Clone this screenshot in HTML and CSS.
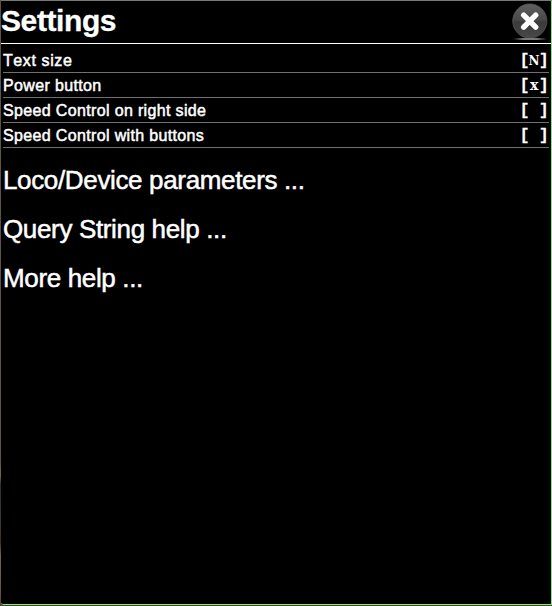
FILE: index.html
```html
<!DOCTYPE html>
<html lang="en">
<head>
<meta charset="utf-8">
<title>Settings</title>
<link rel="stylesheet" href="styles.css">
</head>
<body>
<main class="panel">
  <header class="header">
    <h1 class="title">Settings</h1>
    <svg class="close" width="38" height="40" viewBox="0 0 38 40" role="img" aria-label="Close">
      <defs>
        <linearGradient id="disc" x1="0" y1="0" x2="0" y2="1">
          <stop offset="0" stop-color="#606060"/>
          <stop offset=".48" stop-color="#484848"/>
          <stop offset=".52" stop-color="#3b3b3b"/>
          <stop offset="1" stop-color="#484848"/>
        </linearGradient>
        <linearGradient id="shine" x1="0" y1="0" x2="1" y2="0">
          <stop offset="0" stop-color="#777" stop-opacity="0"/>
          <stop offset=".3" stop-color="#777"/>
          <stop offset=".7" stop-color="#777"/>
          <stop offset="1" stop-color="#777" stop-opacity="0"/>
        </linearGradient>
      </defs>
      <circle cx="18.800" cy="20" r="17.100" fill="url(#disc)" stroke="#555" stroke-width=".8"/>
      <path d="M2 37h34v2H2z" fill="url(#shine)"/>
      <path d="M12.700 14.200l12 12M24.700 14.200l-12 12" stroke="#fff" stroke-width="5.400" stroke-linecap="round"/>
    </svg>
  </header>
  <ul class="options">
    <li class="option"><span class="label short">Text size</span><span class="value">[<span class="mark">N</span>]</span></li>
    <li class="option"><span class="label">Power button</span><span class="value">[<span class="mark lower">x</span>]</span></li>
    <li class="option"><span class="label">Speed Control on right side</span><span class="value">[ ]</span></li>
    <li class="option"><span class="label">Speed Control with buttons</span><span class="value">[ ]</span></li>
  </ul>
  <nav class="links">
    <a class="link">Loco/Device parameters ...</a>
    <a class="link">Query String help ...</a>
    <a class="link">More help ...</a>
  </nav>
</main>
</body>
</html>
```
FILE: styles.css
```css
* { box-sizing: border-box; }
body {
  margin: 0;
  height: 606px;
  padding: 0 0 1px 1px;
  overflow: hidden;
  background: linear-gradient(#5d5340 0 460px, #79664d 475px, #352a2b 485px, #40353d 525px, #4b2b08 543px, #75644e 555px, #735333 590px, #4c4330 606px);
  color: #fff;
  font-family: "Liberation Sans", Arial, sans-serif;
}
.panel {
  height: 605px;
  background: #000;
  border-top: 1px solid #777;
  border-right: 1px solid #78f078;
  border-bottom: 1px solid #78f078;
  border-bottom-left-radius: 3px;
}
.header {
  display: flex;
  justify-content: space-between;
  height: 43px;
  border-bottom: 1px solid #fff;
}
.title {
  margin: 0;
  font-size: 30px;
  line-height: 40px;
  letter-spacing: -0.4px;
  -webkit-text-stroke: 0.3px #fff;
}
.close { display: block; margin-right: 2px; }
.options {
  list-style: none;
  margin: 4px 2px 0;
  padding: 0;
}
.option {
  display: flex;
  justify-content: space-between;
  height: 25px;
  border-bottom: 1px solid #707070;
  font-size: 16px;
  line-height: 25px;
  white-space: pre;
}
.label {
  letter-spacing: 0.35px;
  font-kerning: none;
  -webkit-text-stroke: 0.5px #fff;
}
.short { letter-spacing: 0.6px; }
.value {
  display: flex;
  margin-right: 0.5px;
  font: bold 16px/27px "Liberation Mono", monospace;
  -webkit-text-stroke: 0.3px #fff;
}
.mark {
  display: flex;
  justify-content: center;
  width: 9.6px;
  font: bold 12px/26px "DejaVu Serif", serif;
  -webkit-text-stroke: 0;
}
.lower { font-size: 14px; line-height: 25px; }
.links {
  display: flex;
  flex-direction: column;
  padding: 8px 2px;
}
.link {
  height: 49px;
  font-size: 26px;
  line-height: 49px;
  letter-spacing: -0.35px;
  -webkit-text-stroke: 0.5px #fff;
}
```
